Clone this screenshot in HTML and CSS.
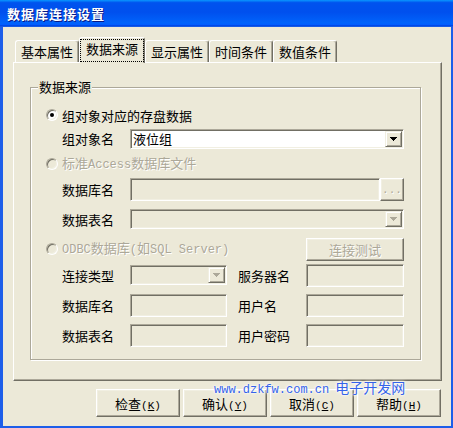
FILE: index.html
```html
<!DOCTYPE html>
<html lang="zh-CN">
	<head>
		<meta charset="UTF-8" />
		<title>数据库连接设置</title>
		<link rel="stylesheet" href="styles.css">
	</head>
	<body>
		<div class="window">
			<div class="title-bar">数据库连接设置</div>
			<div class="window-body">
				<ul class="tabs">
					<li class="tab">基本属性</li>
					<li class="tab active">数据来源</li>
					<li class="tab">显示属性</li>
					<li class="tab">时间条件</li>
					<li class="tab">数值条件</li>
				</ul>

				<div class="tab-panel">
					<fieldset class="group">
						<legend>数据来源</legend>
						<div class="form-grid">
							<!-- 存盘数据 -->
							<span class="radio checked"></span>
							<span class="option">组对象对应的存盘数据</span>

							<span class="label">组对象名</span>
							<div class="field combo enabled span-all">
								<span class="combo-text">液位组</span>
								<span class="drop-btn">
									<svg class="arrow" width="7" height="4" viewBox="0 0 7 4"><path d="M0 0H7V1H6V2H5V3H4V4H3V3H2V2H1V1H0Z"/></svg>
								</span>
							</div>

							<!-- Access -->
							<span class="radio disabled"></span>
							<span class="option disabled-text">标准<span class="en">Access</span>数据库文件</span>

							<span class="label">数据库名</span>
							<div class="file-row span-all">
								<div class="field input"></div>
								<button class="btn browse disabled-text">...</button>
							</div>

							<span class="label">数据表名</span>
							<div class="field combo span-all">
								<span class="combo-text"></span>
								<span class="drop-btn disabled">
									<svg class="arrow" width="7" height="4" viewBox="0 0 7 4"><path d="M0 0H7V1H6V2H5V3H4V4H3V3H2V2H1V1H0Z"/></svg>
								</span>
							</div>

							<!-- ODBC -->
							<span class="radio disabled"></span>
							<span class="option odbc disabled-text"><span class="en">ODBC</span>数据库<span class="en">(</span>如<span class="en">SQL Server)</span></span>
							<button class="btn test disabled-text">连接测试</button>

							<span class="label">连接类型</span>
							<div class="field combo">
								<span class="combo-text"></span>
								<span class="drop-btn disabled">
									<svg class="arrow" width="7" height="4" viewBox="0 0 7 4"><path d="M0 0H7V1H6V2H5V3H4V4H3V3H2V2H1V1H0Z"/></svg>
								</span>
							</div>
							<span class="label right">服务器名</span>
							<div class="field input"></div>

							<span class="label">数据库名</span>
							<div class="field input"></div>
							<span class="label right">用户名</span>
							<div class="field input"></div>

							<span class="label">数据表名</span>
							<div class="field input"></div>
							<span class="label right">用户密码</span>
							<div class="field input"></div>
						</div>
					</fieldset>
				</div>

				<div class="button-row">
					<button class="btn">检查<span class="en">(<u>K</u>)</span></button>
					<button class="btn">确认<span class="en">(<u>Y</u>)</span></button>
					<button class="btn">取消<span class="en">(<u>C</u>)</span></button>
					<button class="btn">帮助<span class="en">(<u>H</u>)</span></button>
				</div>
			</div>

			<div class="watermark"><span class="en">www.dzkfw.com.cn</span>电子开发网</div>
		</div>
	</body>
</html>
```

FILE: styles.css
```css
:root {
	--face: #ece9d8;
	--light: #f1efe2;
	--shadow: #aca899;
	--dark: #716f64;
	--frame: #1d5ee9;
}

* {
	box-sizing: border-box;
}

body {
	margin: 0;
	background: var(--face);
	font-family: "Noto Sans CJK SC", sans-serif;
	font-size: 13px;
	line-height: 15px;
	color: #000;
}

.en {
	font-family: "Liberation Mono", monospace;
	font-size: 12px;
}

.window {
	position: relative;
	width: 453px;
	height: 428px;
	display: flex;
	flex-direction: column;
}

.title-bar {
	height: 27px;
	padding-left: 7px;
	background: linear-gradient(180deg, #0997ff, #0053ee 10%, #0050ee 45%, #0063fb 85%, #005bff 92%, #003dd7 96%, #2a73f0);
	color: #fff;
	font-weight: bold;
	font-size: 13px;
	line-height: 28px;
	letter-spacing: 1px;
	text-shadow: 1px 1px #0a1883;
}

.window-body {
	flex: 1;
	background: var(--face);
	border: solid var(--frame);
	border-width: 0 2px 2px 3px;
	padding: 10px 9px 0 10px;
}

/* Вкладки */
.tabs {
	list-style: none;
	margin: 0;
	padding: 0 0 0 2px;
	height: 25px;
	display: flex;
	align-items: flex-end;
}

.tab {
	height: 22px;
	padding: 0 5px;
	border: 1px solid;
	border-color: #fff var(--dark) transparent #fff;
	border-bottom: 0;
	border-radius: 3px 3px 0 0;
	box-shadow: inset -1px 0 var(--shadow);
	line-height: 21px;
	white-space: nowrap;
}

.tab.active {
	position: relative;
	z-index: 1;
	height: 26px;
	margin-bottom: -1px;
	padding: 0 6px;
	background: var(--face);
	line-height: 22px;
}
.tab.active::before {
	content: "";
	position: absolute;
	top: 1px;
	left: 0;
	right: 0;
	bottom: 1px;
	border: 1px dotted #000;
}

.tab-panel {
	border: 1px solid;
	border-color: #fff var(--dark) var(--dark) #fff;
	box-shadow: inset -1px -1px var(--shadow);
	padding: 17px 20px 20px 16px;
}

/* Группа */
.group {
	margin: 0;
	min-width: 0;
	padding: 10px 15px 11px 7px;
	border: 1px solid var(--shadow);
	box-shadow: inset 1px 1px #fff, 1px 1px #fff;
}
.group legend {
	padding: 0 1px;
	line-height: 14px;
	background: var(--face);
}

.form-grid {
	margin-left: 8px;
	display: grid;
	grid-template-columns: 16px 68px 97px 11px 68px 98px;
	grid-template-rows: 22px 25px 25px 26px 34px 26px 26px 34px 26px;
	align-items: center;
}

.radio {
	grid-column: 1;
	width: 12px;
	height: 12px;
	border-radius: 50%;
	border: 1px solid;
	border-color: var(--shadow) #fff #fff var(--shadow);
	box-shadow: inset 1px 1px var(--dark), inset -1px -1px var(--light);
	background: #fff;
	display: flex;
	align-items: center;
	justify-content: center;
}
.radio.checked::after {
	content: "";
	width: 4px;
	height: 4px;
	border-radius: 50%;
	background: #000;
}
.radio.disabled {
	background: var(--face);
}

.option {
	grid-column: 2 / -1;
	white-space: nowrap;
}
.option.odbc {
	grid-column: 2 / 5;
}

.label {
	grid-column: 2;
	white-space: nowrap;
}
.label.right {
	grid-column: 5;
}

.span-all {
	grid-column: 3 / -1;
}

.disabled-text {
	color: var(--shadow);
	text-shadow: 1px 1px #fff;
}

/* Поля ввода */
.field {
	border: 1px solid;
	border-color: var(--shadow) #fff #fff var(--shadow);
	box-shadow: inset 1px 1px var(--dark), inset -1px -1px var(--light);
	background: var(--face);
}
.field.enabled {
	background: #fff;
}
.field.input {
	height: 23px;
}

.combo {
	height: 20px;
	padding: 1px;
	display: flex;
}
.combo-text {
	flex: 1;
	padding-left: 1px;
	line-height: 16px;
}

.drop-btn {
	width: 17px;
	border: 1px solid;
	border-color: var(--light) var(--dark) var(--dark) var(--light);
	box-shadow: inset 1px 1px #fff, inset -1px -1px var(--shadow);
	background: var(--face);
	display: flex;
	align-items: center;
	justify-content: center;
}
.arrow {
	display: block;
	fill: #000;
}
.drop-btn.disabled .arrow {
	fill: var(--shadow);
}

.file-row {
	display: flex;
}
.file-row .field {
	flex: 1;
}

/* Кнопки */
.btn {
	width: 84px;
	height: 28px;
	padding: 0;
	border: 1px solid;
	border-color: #fff var(--dark) var(--dark) #fff;
	box-shadow: inset -1px -1px var(--shadow), inset 1px 1px var(--light);
	background: var(--face);
	font-family: inherit;
	font-size: 13px;
	color: #000;
	white-space: nowrap;
}
.btn .en {
	font-size: 11px;
}
.btn.disabled-text {
	color: var(--shadow);
}
.btn.browse {
	width: 24px;
	height: 23px;
	font-family: "Liberation Mono", monospace;
	font-size: 11px;
	line-height: 8px;
	padding-top: 2px;
}
.btn.test {
	grid-column: 6;
	width: 98px;
	height: 23px;
}

.button-row {
	margin-top: 8px;
	padding-right: 1px;
	display: flex;
	justify-content: flex-end;
	gap: 3px;
}

/* Водяной знак поверх кнопок */
.watermark {
	position: absolute;
	left: 214px;
	top: 379px;
	color: #3563e9;
	font-size: 14px;
	line-height: 16px;
	white-space: nowrap;
	text-shadow: 0 0 2px #fff, 0 0 2px #fff, 0 0 4px #fff;
}
.watermark .en {
	font-size: 12px;
	margin-right: 6px;
}
```
